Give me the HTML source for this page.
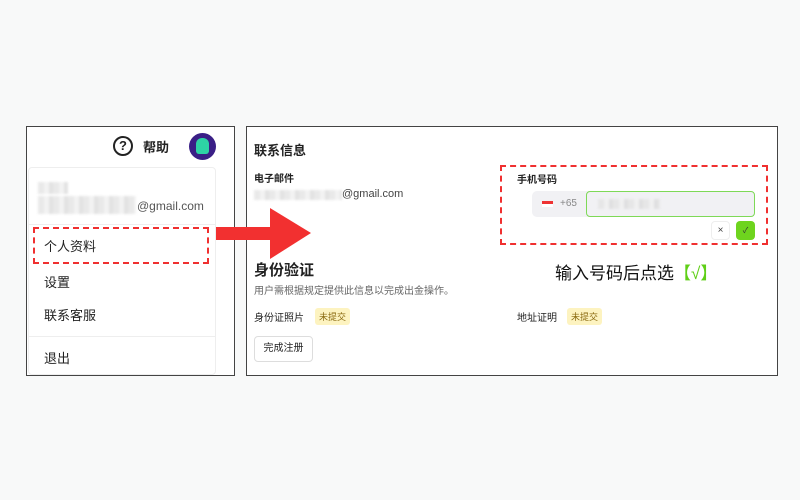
<!DOCTYPE html>
<html><head><meta charset="utf-8"><style>
*{margin:0;padding:0;box-sizing:border-box}
body{width:800px;height:500px;background:#f8f9f9;position:relative;overflow:hidden;font-family:"Liberation Sans","Noto Sans CJK SC",sans-serif;color:#222}
.a{position:absolute;white-space:nowrap}
.panel{position:absolute;background:#fff;border:1px solid #444}
.blur{position:absolute;background:repeating-linear-gradient(90deg,#e4e4e4 0 6px,#f0f0f0 6px 11px,#dcdcdc 11px 15px);filter:blur(1px)}
.badge{position:absolute;background:#fdf3c0;color:#8a6a10;font-size:9px;padding:2px 4px;border-radius:3px}
</style></head><body>
<div class="panel" style="left:26px;top:126px;width:209px;height:250px"></div>
<div class="a" style="left:113px;top:136px;width:20px;height:20px;border:2px solid #222;border-radius:50%;font-size:13px;font-weight:bold;text-align:center;line-height:16px">?</div>
<div class="a" style="left:143px;top:137px;font-size:13px;font-weight:bold">帮助</div>
<div class="a" style="left:189px;top:133px;width:27px;height:27px;border-radius:50%;background:#3a1f86"><div style="position:absolute;left:7px;top:5px;width:13px;height:16px;background:#2ed3a5;border-radius:6px 6px 3px 3px"></div></div>
<div class="a" style="left:28px;top:167px;width:188px;height:208px;background:#fff;border:1px solid #eee;border-radius:4px"></div>
<div class="blur" style="left:38px;top:182px;width:30px;height:12px;opacity:.8"></div>
<div class="blur" style="left:38px;top:196px;width:98px;height:18px;opacity:.8"></div>
<div class="a" style="left:137px;top:199px;font-size:12px;color:#555">@gmail.com</div>
<div class="a" style="left:29px;top:224px;width:187px;height:1px;background:#eee"></div>
<div class="a" style="left:33px;top:227px;width:176px;height:37px;border:2px dashed #f03030"></div>
<div class="a" style="left:44px;top:236px;font-size:13px">个人资料</div>
<div class="a" style="left:44px;top:272px;font-size:13px">设置</div>
<div class="a" style="left:44px;top:305px;font-size:13px">联系客服</div>
<div class="a" style="left:29px;top:336px;width:187px;height:1px;background:#eee"></div>
<div class="a" style="left:44px;top:348px;font-size:13px">退出</div>
<div class="panel" style="left:246px;top:126px;width:532px;height:250px"></div>
<svg class="a" style="left:216px;top:205px" width="100" height="56"><rect x="0" y="22" width="56" height="13" fill="#f23030"/><polygon points="54,3 95,28 54,54" fill="#f23030"/></svg>
<div class="a" style="left:254px;top:140px;font-size:13px;font-weight:bold">联系信息</div>
<div class="a" style="left:254px;top:170px;font-size:10px;font-weight:bold">电子邮件</div>
<div class="blur" style="left:254px;top:190px;width:88px;height:10px;opacity:.8"></div>
<div class="a" style="left:342px;top:188px;font-size:11px;color:#444">@gmail.com</div>
<div class="a" style="left:254px;top:259px;font-size:15px;font-weight:bold">身份验证</div>
<div class="a" style="left:254px;top:282px;font-size:10px;color:#666">用户需根据规定提供此信息以完成出金操作。</div>
<div class="a" style="left:254px;top:309px;font-size:10px">身份证照片</div>
<div class="badge" style="left:315px;top:308px">未提交</div>
<div class="a" style="left:254px;top:336px;width:59px;height:26px;border:1px solid #ddd;border-radius:4px;font-size:10px;text-align:center;line-height:24px">完成注册</div>
<div class="a" style="left:517px;top:309px;font-size:10px">地址证明</div>
<div class="badge" style="left:567px;top:308px">未提交</div>
<div class="a" style="left:500px;top:165px;width:268px;height:80px;border:2px dashed #f03030"></div>
<div class="a" style="left:517px;top:171px;font-size:10px;font-weight:bold">手机号码</div>
<div class="a" style="left:532px;top:191px;width:222px;height:26px;background:#f1f1f4;border-radius:5px"></div>
<div class="a" style="left:542px;top:201px;width:11px;height:6px;background:linear-gradient(#e33 50%,#fff 50%)"></div>
<div class="a" style="left:560px;top:198px;font-size:10px;color:#888">+65</div>
<div class="a" style="left:586px;top:191px;width:169px;height:26px;border:1px solid #7ed957;border-radius:4px;background:#f1f1f4"></div>
<div class="blur" style="left:598px;top:199px;width:62px;height:10px;opacity:.8"></div>
<div class="a" style="left:711px;top:221px;width:19px;height:19px;background:#fff;border:1px solid #eee;border-radius:4px;font-size:10px;text-align:center;line-height:17px;color:#444">×</div>
<div class="a" style="left:736px;top:221px;width:19px;height:19px;background:#6ed41e;border-radius:4px;font-size:8px;text-align:center;line-height:19px;color:#333">✓</div>
<div class="a" style="left:555px;top:259px;font-size:17px;color:#111">输入号码后点选<span style="color:#5fcf17">【√】</span></div>
</body></html>
